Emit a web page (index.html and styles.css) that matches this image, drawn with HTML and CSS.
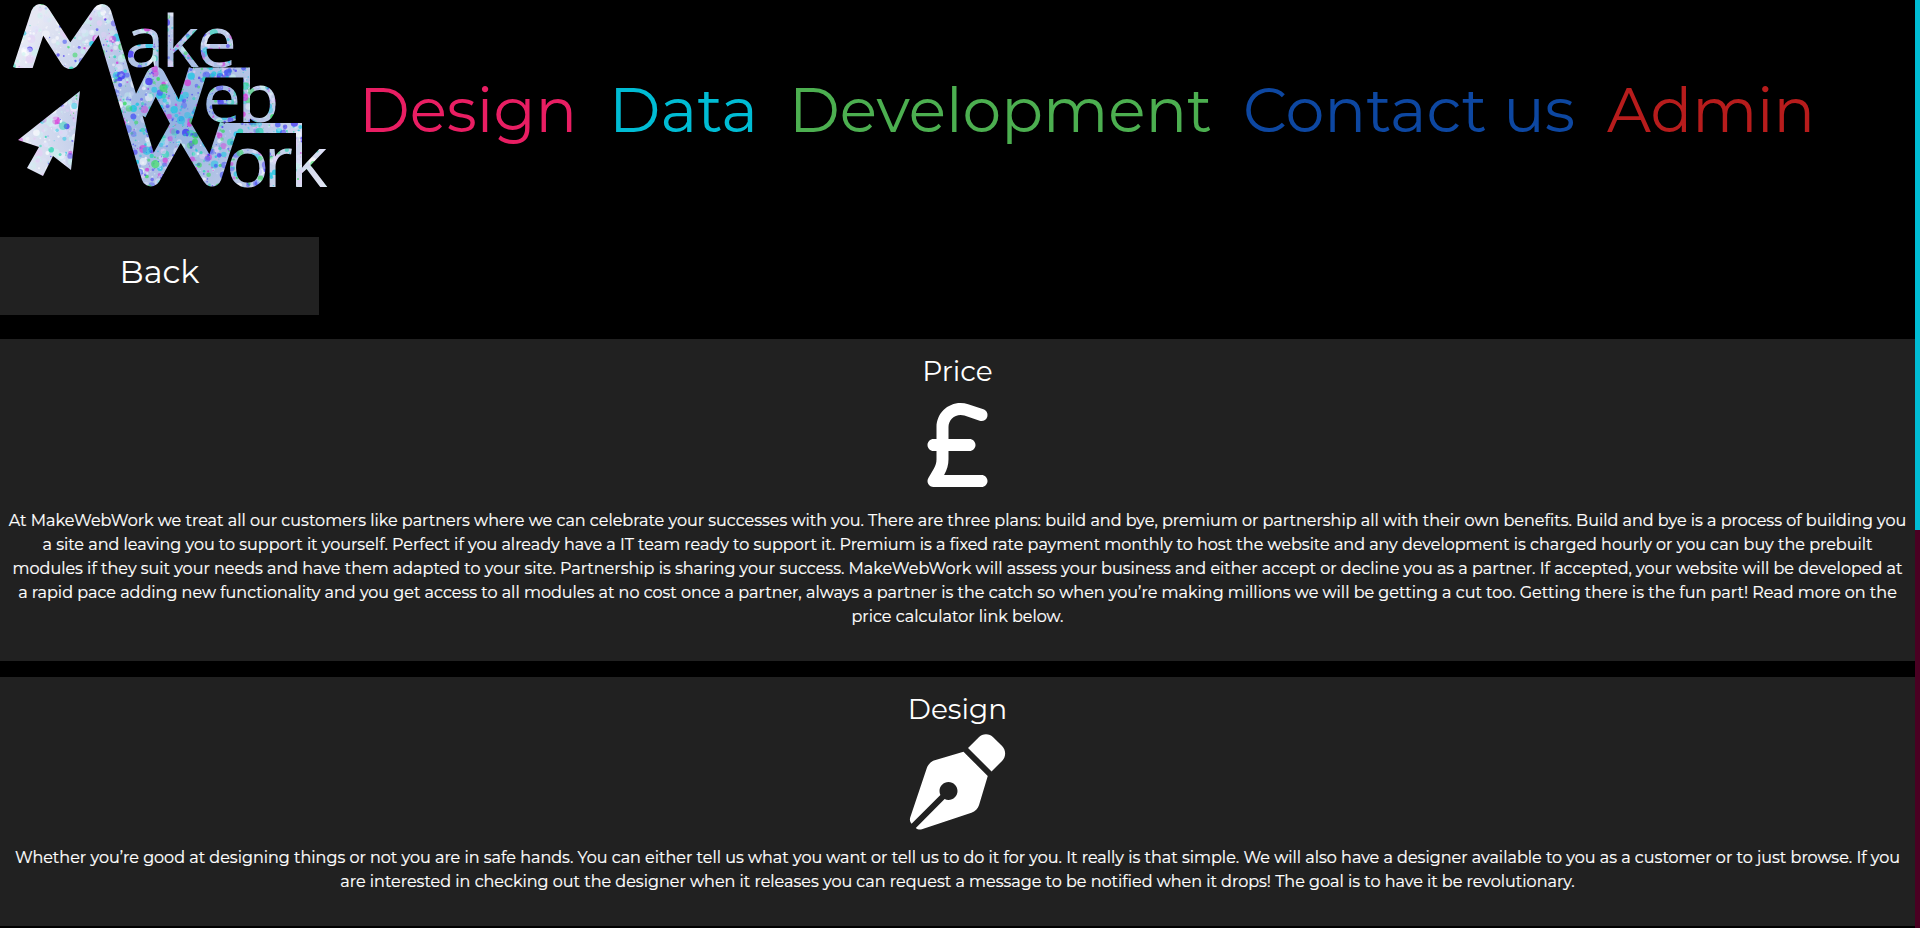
FILE: index.html
```html
<!DOCTYPE html>
<html lang="en">
<head>
<meta charset="utf-8">
<title>MakeWebWork</title>
<link rel="stylesheet" href="styles.css">
</head>
<body>
<div class="page">
  <main class="content">
    <header class="header">
      <svg class="logo" width="340" height="200" viewBox="0 0 340 200">
        <defs>
          <radialGradient id="base" gradientUnits="userSpaceOnUse" cx="180" cy="115" r="170">
            <stop offset="0" stop-color="#8fb0e0"/>
            <stop offset=".45" stop-color="#b4c4e6"/>
            <stop offset="1" stop-color="#e6e8f4"/>
          </radialGradient>
          <pattern id="speckle" patternUnits="userSpaceOnUse" width="340" height="200">
            <rect width="340" height="200" fill="url(#base)"/>
            <g id="dots"></g>
          </pattern>
        </defs>
        <g fill="none" stroke="url(#speckle)" stroke-width="19" stroke-linejoin="round">
          <path d="M22 70 40.500 13.500 70 59.500 102 13.500 151 177 180.500 124 212 177 229 125"/>
          <path d="M137 113 155.500 76 181 124 198 70"/>
          <path d="M193 72.500H250" stroke-width="10"/>
          <path d="M225 128H302" stroke-width="10"/>
          <path d="M247 68V122M299 124V186" stroke-width="6"/>
        </g>
        <path d="M8 68H34V80H8Z"/>
        <path d="M80 91 18 140 39 147 27 168 43 176 53 156 71 170Z" fill="url(#speckle)"/>
        <g class="logo-text" fill="url(#speckle)">
          <text x="124.500 161.500 196.500" y="67">ake</text>
          <text class="narrow" x="202.500 237.500" y="122">eb</text>
          <text x="226 263.500 290" y="186.500">ork</text>
        </g>
      </svg>
      <nav class="nav">
        <a class="pink"><svg width="205" height="90"><text x="-7" y="62" textLength="218" lengthAdjust="spacingAndGlyphs">Design</text></svg></a>
        <a class="cyan"><svg width="136" height="90"><text x="-7" y="62" textLength="149" lengthAdjust="spacingAndGlyphs">Data</text></svg></a>
        <a class="green"><svg width="414" height="90"><text x="-7" y="62" textLength="423" lengthAdjust="spacingAndGlyphs">Development</text></svg></a>
        <a class="blue"><svg width="327" height="90"><text x="-4" y="62" textLength="332" lengthAdjust="spacingAndGlyphs">Contact us</text></svg></a>
        <a class="red"><svg width="202" height="90"><text x="-1" y="62" textLength="208" lengthAdjust="spacingAndGlyphs">Admin</text></svg></a>
      </nav>
    </header>
    <a class="back">Back</a>
    <section class="card price">
      <h2 class="title">Price</h2>
      <svg class="icon" width="61" height="96" viewBox="0 0 320 512"><path d="M112 160.400c0-35.500 28.800-64.400 64.400-64.400c6.900 0 13.800 1.100 20.400 3.300l81.200 27.100c16.800 5.600 34.900-3.500 40.500-20.200s-3.500-34.900-20.200-40.500L217 38.600c-13.100-4.400-26.800-6.600-40.600-6.600C105.500 32 48 89.500 48 160.400V224H32c-17.700 0-32 14.300-32 32s14.300 32 32 32H48v44.500c0 17.400-4.700 34.500-13.700 49.400L4.600 431.500c-5.900 9.900-6.100 22.200-.4 32.200S20.500 480 32 480H288c17.700 0 32-14.300 32-32s-14.300-32-32-32H88.500l.7-1.100C104.100 390 112 361.500 112 332.500V288H224c17.700 0 32-14.300 32-32s-14.300-32-32-32H112V160.400z"/></svg>
      <p class="copy">At MakeWebWork we treat all our customers like partners where we can celebrate your successes with you. There are three plans: build and bye, premium or partnership all with their own benefits. Build and bye is a process of building you a site and leaving you to support it yourself. Perfect if you already have a IT team ready to support it. Premium is a fixed rate payment monthly to host the website and any development is charged hourly or you can buy the prebuilt modules if they suit your needs and have them adapted to your site. Partnership is sharing your success. MakeWebWork will assess your business and either accept or decline you as a partner. If accepted, your website will be developed at a rapid pace adding new functionality and you get access to all modules at no cost once a partner, always a partner is the catch so when you’re making millions we will be getting a cut too. Getting there is the fun part! Read more on the price calculator link below.</p>
    </section>
    <section class="card design">
      <h2 class="title">Design</h2>
      <svg class="icon" width="97" height="96" viewBox="0 0 512 512"><path d="M368.400 18.300L312.100 74.500 437.500 199.900l56.200-56.200c21.900-21.900 21.900-57.300 0-79.200L447.600 18.300c-21.900-21.900-57.300-21.900-79.200 0zM288 94.600l-9.200 2.800L134.700 140.600c-19.900 6-35.700 21.200-42.300 41L3.800 445.800c-3.800 11.300-1 23.900 7.300 32.400L164.700 324.700c-3-6.300-4.700-13.300-4.700-20.700c0-26.500 21.500-48 48-48s48 21.500 48 48s-21.500 48-48 48c-7.400 0-14.400-1.700-20.700-4.700L33.700 500.900c8.600 8.300 21.100 11.200 32.400 7.300l264.300-88.600c19.700-6.600 35-22.400 41-42.300l43.200-144.100 2.700-9.200L288 94.600z"/></svg>
      <p class="copy">Whether you’re good at designing things or not you are in safe hands. You can either tell us what you want or tell us to do it for you. It really is that simple. We will also have a designer available to you as a customer or to just browse. If you are interested in checking out the designer when it releases you can request a message to be notified when it drops! The goal is to have it be revolutionary.</p>
    </section>
  </main>
  <div class="scroll-track"><div class="scroll-thumb"></div></div>
</div>
<script src="logo.js"></script>
</body>
</html>
```
FILE: styles.css
```css
* { box-sizing: border-box; }
body {
  margin: 0;
  background: #000;
  color: #fff;
  font-family: Montserrat, Inter, "Open Sans", sans-serif;
  overflow: hidden;
}
svg { display: block; overflow: visible; }
.page { display: flex; height: 928px; overflow: hidden; }
.content { width: 1915px; }
.header { display: flex; height: 237px; }
.logo { flex: none; }
.logo-text { font: 72px "Open Sans", "Noto Sans", sans-serif; }
.logo-text .narrow { font-size: 68.500px; }
.nav { display: flex; padding: 70px 0 0 26px; }
.nav text { font-size: 61.500px; font-weight: 400; }
.nav .pink { margin-right: 45px; }
.nav .cyan { margin-right: 44px; }
.nav .green { margin-right: 37px; }
.nav .blue { margin-right: 34px; }
.pink { fill: #e91e63; }
.cyan { fill: #00bcd4; }
.green { fill: #4caf50; }
.blue { fill: #0d47a1; }
.red { fill: #b71c1c; }
.back {
  display: block;
  width: 319px;
  height: 78px;
  margin-bottom: 24px;
  padding-top: 11px;
  background: #212121;
  font-size: 32px;
  line-height: 48px;
  text-align: center;
}
.card {
  display: flex;
  flex-direction: column;
  align-items: center;
  background: #212121;
  fill: #fff;
  padding: 11px 8px 0;
}
.price { height: 322px; margin-bottom: 16px; }
.design { height: 249px; }
.title {
  margin: 0;
  font-size: 28px;
  font-weight: 400;
  line-height: 42px;
}
.icon { margin-top: 5px; }
.design .icon { margin-top: 4px; }
.copy {
  margin: 16px 0 0;
  font-size: 16px;
  line-height: 24px;
  text-align: center;
  -webkit-text-stroke: 0.200px #fff;
}
.scroll-track { width: 5px; background: #4a0022; }
.scroll-thumb { height: 530px; background: #00bcd4; }
```
FILE: logo.js
```js
// Paint splatter that fills the logo; seeded so it is the same on each load.
let s = 77;
function rnd() {
  s = (s + 0x6d2b79f5) | 0;
  let t = Math.imul(s ^ (s >>> 15), 1 | s);
  t = (t + Math.imul(t ^ (t >>> 7), 61 | t)) ^ t;
  return ((t ^ (t >>> 14)) >>> 0) / 4294967296;
}
const vividPaints = ['#4030f4', '#30dc58', '#10c8e4', '#d838d8', '#4a58f4', '#20d8b0'];
const palePaints = ['#ffffff', '#c8f4ee', '#e6ccf6', '#dfe2fa'];
const pick = (a) => a[Math.floor(rnd() * a.length)];
let out = '';
for (let i = 0; i < 4200; i++) {
  const x = rnd() * 340, y = rnd() * 200;
  const near = Math.max(0, 1 - Math.hypot(x - 185, y - 115) / 145);
  const vivid = rnd() < 0.12 + near * 0.95;
  const r = 0.6 + Math.pow(rnd(), 3) * 3.6;
  const alpha = vivid ? 0.4 + rnd() * 0.4 : 0.3 + rnd() * 0.4;
  out += `<circle cx="${x.toFixed(1)}" cy="${y.toFixed(1)}" r="${r.toFixed(1)}" fill="${pick(vivid ? vividPaints : palePaints)}" opacity="${alpha.toFixed(2)}"/>`;
}
document.getElementById('dots').innerHTML = out;
```
